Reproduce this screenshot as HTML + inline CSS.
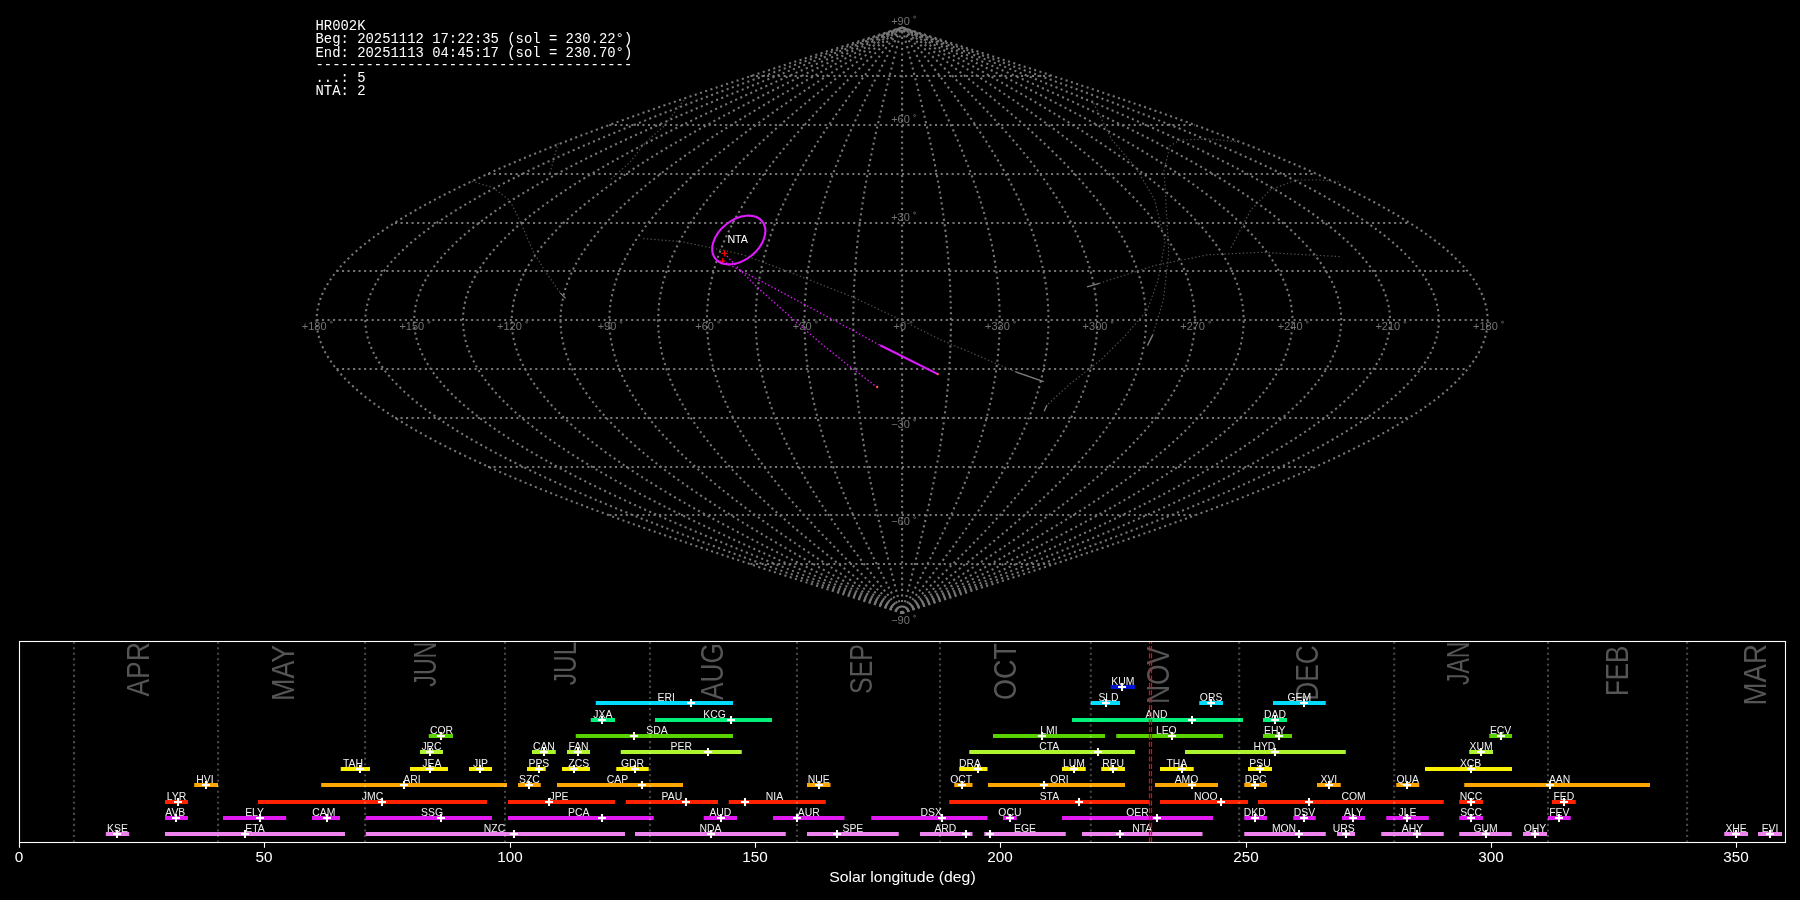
<!DOCTYPE html><html><head><meta charset="utf-8"><style>html,body{margin:0;padding:0;background:#000;width:1800px;height:900px;overflow:hidden}svg{display:block;will-change:transform}</style></head><body>
<svg width="1800" height="900" viewBox="0 0 1800 900">
<rect x="0" y="0" width="1800" height="900" fill="#000"/>
<g fill="none" stroke="#767676" stroke-width="2.08" stroke-dasharray="2.08 3.44">
<path d="M902.1 613.0 L922.5 606.5 L942.9 600.0 L963.3 593.5 L983.6 587.0 L1003.8 580.5 L1023.9 574.0 L1043.8 567.5 L1063.5 560.9 L1083.1 554.4 L1102.4 547.9 L1121.5 541.4 L1140.3 534.9 L1158.8 528.4 L1177.0 521.9 L1194.9 515.4 L1212.4 508.9 L1229.6 502.4 L1246.3 495.9 L1262.6 489.4 L1278.5 482.9 L1293.9 476.4 L1308.9 469.9 L1323.3 463.3 L1337.3 456.8 L1350.7 450.3 L1363.6 443.8 L1375.9 437.3 L1387.6 430.8 L1398.7 424.3 L1409.2 417.8 L1419.1 411.3 L1428.4 404.8 L1437.1 398.3 L1445.1 391.8 L1452.4 385.3 L1459.0 378.8 L1465.0 372.3 L1470.3 365.7 L1474.9 359.2 L1478.8 352.7 L1482.0 346.2 L1484.5 339.7 L1486.3 333.2 L1487.3 326.7 L1487.7 320.2 L1487.3 313.7 L1486.3 307.2 L1484.5 300.7 L1482.0 294.2 L1478.8 287.7 L1474.9 281.2 L1470.3 274.7 L1465.0 268.1 L1459.0 261.6 L1452.4 255.1 L1445.1 248.6 L1437.1 242.1 L1428.4 235.6 L1419.1 229.1 L1409.2 222.6 L1398.7 216.1 L1387.6 209.6 L1375.9 203.1 L1363.6 196.6 L1350.7 190.1 L1337.3 183.6 L1323.3 177.1 L1308.9 170.5 L1293.9 164.0 L1278.5 157.5 L1262.6 151.0 L1246.3 144.5 L1229.6 138.0 L1212.4 131.5 L1194.9 125.0 L1177.0 118.5 L1158.8 112.0 L1140.3 105.5 L1121.5 99.0 L1102.4 92.5 L1083.1 86.0 L1063.5 79.5 L1043.8 72.9 L1023.9 66.4 L1003.8 59.9 L983.6 53.4 L963.3 46.9 L942.9 40.4 L922.5 33.9 L902.1 27.4"/>
<path d="M902.1 613.0 L920.8 606.5 L939.5 600.0 L958.2 593.5 L976.8 587.0 L995.3 580.5 L1013.7 574.0 L1032.0 567.5 L1050.1 560.9 L1068.0 554.4 L1085.7 547.9 L1103.2 541.4 L1120.4 534.9 L1137.4 528.4 L1154.1 521.9 L1170.5 515.4 L1186.6 508.9 L1202.3 502.4 L1217.6 495.9 L1232.6 489.4 L1247.1 482.9 L1261.3 476.4 L1275.0 469.9 L1288.2 463.3 L1301.0 456.8 L1313.3 450.3 L1325.1 443.8 L1336.4 437.3 L1347.1 430.8 L1357.3 424.3 L1367.0 417.8 L1376.1 411.3 L1384.6 404.8 L1392.5 398.3 L1399.8 391.8 L1406.5 385.3 L1412.6 378.8 L1418.1 372.3 L1422.9 365.7 L1427.2 359.2 L1430.7 352.7 L1433.7 346.2 L1436.0 339.7 L1437.6 333.2 L1438.6 326.7 L1438.9 320.2 L1438.6 313.7 L1437.6 307.2 L1436.0 300.7 L1433.7 294.2 L1430.7 287.7 L1427.2 281.2 L1422.9 274.7 L1418.1 268.1 L1412.6 261.6 L1406.5 255.1 L1399.8 248.6 L1392.5 242.1 L1384.6 235.6 L1376.1 229.1 L1367.0 222.6 L1357.3 216.1 L1347.1 209.6 L1336.4 203.1 L1325.1 196.6 L1313.3 190.1 L1301.0 183.6 L1288.2 177.1 L1275.0 170.5 L1261.3 164.0 L1247.1 157.5 L1232.6 151.0 L1217.6 144.5 L1202.3 138.0 L1186.6 131.5 L1170.5 125.0 L1154.1 118.5 L1137.4 112.0 L1120.4 105.5 L1103.2 99.0 L1085.7 92.5 L1068.0 86.0 L1050.1 79.5 L1032.0 72.9 L1013.7 66.4 L995.3 59.9 L976.8 53.4 L958.2 46.9 L939.5 40.4 L920.8 33.9 L902.1 27.4"/>
<path d="M902.1 613.0 L919.1 606.5 L936.1 600.0 L953.1 593.5 L970.0 587.0 L986.8 580.5 L1003.6 574.0 L1020.2 567.5 L1036.6 560.9 L1052.9 554.4 L1069.0 547.9 L1084.9 541.4 L1100.6 534.9 L1116.0 528.4 L1131.2 521.9 L1146.1 515.4 L1160.7 508.9 L1175.0 502.4 L1188.9 495.9 L1202.5 489.4 L1215.8 482.9 L1228.6 476.4 L1241.1 469.9 L1253.1 463.3 L1264.8 456.8 L1275.9 450.3 L1286.6 443.8 L1296.9 437.3 L1306.7 430.8 L1315.9 424.3 L1324.7 417.8 L1333.0 411.3 L1340.7 404.8 L1347.9 398.3 L1354.6 391.8 L1360.7 385.3 L1366.2 378.8 L1371.2 372.3 L1375.6 365.7 L1379.4 359.2 L1382.7 352.7 L1385.3 346.2 L1387.4 339.7 L1388.9 333.2 L1389.8 326.7 L1390.1 320.2 L1389.8 313.7 L1388.9 307.2 L1387.4 300.7 L1385.3 294.2 L1382.7 287.7 L1379.4 281.2 L1375.6 274.7 L1371.2 268.1 L1366.2 261.6 L1360.7 255.1 L1354.6 248.6 L1347.9 242.1 L1340.7 235.6 L1333.0 229.1 L1324.7 222.6 L1315.9 216.1 L1306.7 209.6 L1296.9 203.1 L1286.6 196.6 L1275.9 190.1 L1264.8 183.6 L1253.1 177.1 L1241.1 170.5 L1228.6 164.0 L1215.8 157.5 L1202.5 151.0 L1188.9 144.5 L1175.0 138.0 L1160.7 131.5 L1146.1 125.0 L1131.2 118.5 L1116.0 112.0 L1100.6 105.5 L1084.9 99.0 L1069.0 92.5 L1052.9 86.0 L1036.6 79.5 L1020.2 72.9 L1003.6 66.4 L986.8 59.9 L970.0 53.4 L953.1 46.9 L936.1 40.4 L919.1 33.9 L902.1 27.4"/>
<path d="M902.1 613.0 L917.4 606.5 L932.7 600.0 L948.0 593.5 L963.2 587.0 L978.4 580.5 L993.4 574.0 L1008.4 567.5 L1023.2 560.9 L1037.8 554.4 L1052.3 547.9 L1066.6 541.4 L1080.7 534.9 L1094.6 528.4 L1108.3 521.9 L1121.7 515.4 L1134.8 508.9 L1147.7 502.4 L1160.3 495.9 L1172.5 489.4 L1184.4 482.9 L1196.0 476.4 L1207.2 469.9 L1218.0 463.3 L1228.5 456.8 L1238.5 450.3 L1248.2 443.8 L1257.4 437.3 L1266.2 430.8 L1274.6 424.3 L1282.5 417.8 L1289.9 411.3 L1296.8 404.8 L1303.3 398.3 L1309.3 391.8 L1314.8 385.3 L1319.8 378.8 L1324.3 372.3 L1328.2 365.7 L1331.7 359.2 L1334.6 352.7 L1337.0 346.2 L1338.9 339.7 L1340.2 333.2 L1341.0 326.7 L1341.3 320.2 L1341.0 313.7 L1340.2 307.2 L1338.9 300.7 L1337.0 294.2 L1334.6 287.7 L1331.7 281.2 L1328.2 274.7 L1324.3 268.1 L1319.8 261.6 L1314.8 255.1 L1309.3 248.6 L1303.3 242.1 L1296.8 235.6 L1289.9 229.1 L1282.5 222.6 L1274.6 216.1 L1266.2 209.6 L1257.4 203.1 L1248.2 196.6 L1238.5 190.1 L1228.5 183.6 L1218.0 177.1 L1207.2 170.5 L1196.0 164.0 L1184.4 157.5 L1172.5 151.0 L1160.3 144.5 L1147.7 138.0 L1134.8 131.5 L1121.7 125.0 L1108.3 118.5 L1094.6 112.0 L1080.7 105.5 L1066.6 99.0 L1052.3 92.5 L1037.8 86.0 L1023.2 79.5 L1008.4 72.9 L993.4 66.4 L978.4 59.9 L963.2 53.4 L948.0 46.9 L932.7 40.4 L917.4 33.9 L902.1 27.4"/>
<path d="M902.1 613.0 L915.7 606.5 L929.3 600.0 L942.9 593.5 L956.4 587.0 L969.9 580.5 L983.3 574.0 L996.5 567.5 L1009.7 560.9 L1022.7 554.4 L1035.6 547.9 L1048.3 541.4 L1060.9 534.9 L1073.2 528.4 L1085.4 521.9 L1097.3 515.4 L1109.0 508.9 L1120.4 502.4 L1131.6 495.9 L1142.5 489.4 L1153.0 482.9 L1163.3 476.4 L1173.3 469.9 L1182.9 463.3 L1192.2 456.8 L1201.2 450.3 L1209.7 443.8 L1217.9 437.3 L1225.8 430.8 L1233.2 424.3 L1240.2 417.8 L1246.8 411.3 L1253.0 404.8 L1258.7 398.3 L1264.1 391.8 L1269.0 385.3 L1273.4 378.8 L1277.4 372.3 L1280.9 365.7 L1284.0 359.2 L1286.6 352.7 L1288.7 346.2 L1290.4 339.7 L1291.5 333.2 L1292.3 326.7 L1292.5 320.2 L1292.3 313.7 L1291.5 307.2 L1290.4 300.7 L1288.7 294.2 L1286.6 287.7 L1284.0 281.2 L1280.9 274.7 L1277.4 268.1 L1273.4 261.6 L1269.0 255.1 L1264.1 248.6 L1258.7 242.1 L1253.0 235.6 L1246.8 229.1 L1240.2 222.6 L1233.2 216.1 L1225.8 209.6 L1217.9 203.1 L1209.7 196.6 L1201.2 190.1 L1192.2 183.6 L1182.9 177.1 L1173.3 170.5 L1163.3 164.0 L1153.0 157.5 L1142.5 151.0 L1131.6 144.5 L1120.4 138.0 L1109.0 131.5 L1097.3 125.0 L1085.4 118.5 L1073.2 112.0 L1060.9 105.5 L1048.3 99.0 L1035.6 92.5 L1022.7 86.0 L1009.7 79.5 L996.5 72.9 L983.3 66.4 L969.9 59.9 L956.4 53.4 L942.9 46.9 L929.3 40.4 L915.7 33.9 L902.1 27.4"/>
<path d="M902.1 613.0 L914.0 606.5 L925.9 600.0 L937.8 593.5 L949.6 587.0 L961.4 580.5 L973.1 574.0 L984.7 567.5 L996.3 560.9 L1007.7 554.4 L1018.9 547.9 L1030.1 541.4 L1041.0 534.9 L1051.8 528.4 L1062.5 521.9 L1072.9 515.4 L1083.1 508.9 L1093.1 502.4 L1102.9 495.9 L1112.4 489.4 L1121.7 482.9 L1130.7 476.4 L1139.4 469.9 L1147.8 463.3 L1156.0 456.8 L1163.8 450.3 L1171.3 443.8 L1178.5 437.3 L1185.3 430.8 L1191.8 424.3 L1197.9 417.8 L1203.7 411.3 L1209.1 404.8 L1214.2 398.3 L1218.8 391.8 L1223.1 385.3 L1227.0 378.8 L1230.5 372.3 L1233.5 365.7 L1236.2 359.2 L1238.5 352.7 L1240.4 346.2 L1241.8 339.7 L1242.9 333.2 L1243.5 326.7 L1243.7 320.2 L1243.5 313.7 L1242.9 307.2 L1241.8 300.7 L1240.4 294.2 L1238.5 287.7 L1236.2 281.2 L1233.5 274.7 L1230.5 268.1 L1227.0 261.6 L1223.1 255.1 L1218.8 248.6 L1214.2 242.1 L1209.1 235.6 L1203.7 229.1 L1197.9 222.6 L1191.8 216.1 L1185.3 209.6 L1178.5 203.1 L1171.3 196.6 L1163.8 190.1 L1156.0 183.6 L1147.8 177.1 L1139.4 170.5 L1130.7 164.0 L1121.7 157.5 L1112.4 151.0 L1102.9 144.5 L1093.1 138.0 L1083.1 131.5 L1072.9 125.0 L1062.5 118.5 L1051.8 112.0 L1041.0 105.5 L1030.1 99.0 L1018.9 92.5 L1007.7 86.0 L996.3 79.5 L984.7 72.9 L973.1 66.4 L961.4 59.9 L949.6 53.4 L937.8 46.9 L925.9 40.4 L914.0 33.9 L902.1 27.4"/>
<path d="M902.1 613.0 L912.3 606.5 L922.5 600.0 L932.7 593.5 L942.8 587.0 L952.9 580.5 L963.0 574.0 L972.9 567.5 L982.8 560.9 L992.6 554.4 L1002.2 547.9 L1011.8 541.4 L1021.2 534.9 L1030.5 528.4 L1039.6 521.9 L1048.5 515.4 L1057.3 508.9 L1065.8 502.4 L1074.2 495.9 L1082.4 489.4 L1090.3 482.9 L1098.0 476.4 L1105.5 469.9 L1112.7 463.3 L1119.7 456.8 L1126.4 450.3 L1132.8 443.8 L1139.0 437.3 L1144.8 430.8 L1150.4 424.3 L1155.7 417.8 L1160.6 411.3 L1165.3 404.8 L1169.6 398.3 L1173.6 391.8 L1177.2 385.3 L1180.6 378.8 L1183.6 372.3 L1186.2 365.7 L1188.5 359.2 L1190.4 352.7 L1192.0 346.2 L1193.3 339.7 L1194.2 333.2 L1194.7 326.7 L1194.9 320.2 L1194.7 313.7 L1194.2 307.2 L1193.3 300.7 L1192.0 294.2 L1190.4 287.7 L1188.5 281.2 L1186.2 274.7 L1183.6 268.1 L1180.6 261.6 L1177.2 255.1 L1173.6 248.6 L1169.6 242.1 L1165.3 235.6 L1160.6 229.1 L1155.7 222.6 L1150.4 216.1 L1144.8 209.6 L1139.0 203.1 L1132.8 196.6 L1126.4 190.1 L1119.7 183.6 L1112.7 177.1 L1105.5 170.5 L1098.0 164.0 L1090.3 157.5 L1082.4 151.0 L1074.2 144.5 L1065.8 138.0 L1057.3 131.5 L1048.5 125.0 L1039.6 118.5 L1030.5 112.0 L1021.2 105.5 L1011.8 99.0 L1002.2 92.5 L992.6 86.0 L982.8 79.5 L972.9 72.9 L963.0 66.4 L952.9 59.9 L942.8 53.4 L932.7 46.9 L922.5 40.4 L912.3 33.9 L902.1 27.4"/>
<path d="M902.1 613.0 L910.6 606.5 L919.1 600.0 L927.6 593.5 L936.1 587.0 L944.5 580.5 L952.8 574.0 L961.1 567.5 L969.4 560.9 L977.5 554.4 L985.6 547.9 L993.5 541.4 L1001.3 534.9 L1009.1 528.4 L1016.6 521.9 L1024.1 515.4 L1031.4 508.9 L1038.5 502.4 L1045.5 495.9 L1052.3 489.4 L1058.9 482.9 L1065.4 476.4 L1071.6 469.9 L1077.6 463.3 L1083.4 456.8 L1089.0 450.3 L1094.4 443.8 L1099.5 437.3 L1104.4 430.8 L1109.0 424.3 L1113.4 417.8 L1117.5 411.3 L1121.4 404.8 L1125.0 398.3 L1128.3 391.8 L1131.4 385.3 L1134.2 378.8 L1136.6 372.3 L1138.8 365.7 L1140.8 359.2 L1142.4 352.7 L1143.7 346.2 L1144.8 339.7 L1145.5 333.2 L1145.9 326.7 L1146.1 320.2 L1145.9 313.7 L1145.5 307.2 L1144.8 300.7 L1143.7 294.2 L1142.4 287.7 L1140.8 281.2 L1138.8 274.7 L1136.6 268.1 L1134.2 261.6 L1131.4 255.1 L1128.3 248.6 L1125.0 242.1 L1121.4 235.6 L1117.5 229.1 L1113.4 222.6 L1109.0 216.1 L1104.4 209.6 L1099.5 203.1 L1094.4 196.6 L1089.0 190.1 L1083.4 183.6 L1077.6 177.1 L1071.6 170.5 L1065.4 164.0 L1058.9 157.5 L1052.3 151.0 L1045.5 144.5 L1038.5 138.0 L1031.4 131.5 L1024.1 125.0 L1016.6 118.5 L1009.1 112.0 L1001.3 105.5 L993.5 99.0 L985.6 92.5 L977.5 86.0 L969.4 79.5 L961.1 72.9 L952.8 66.4 L944.5 59.9 L936.1 53.4 L927.6 46.9 L919.1 40.4 L910.6 33.9 L902.1 27.4"/>
<path d="M902.1 613.0 L908.9 606.5 L915.7 600.0 L922.5 593.5 L929.3 587.0 L936.0 580.5 L942.7 574.0 L949.3 567.5 L955.9 560.9 L962.4 554.4 L968.9 547.9 L975.2 541.4 L981.5 534.9 L987.7 528.4 L993.7 521.9 L999.7 515.4 L1005.5 508.9 L1011.3 502.4 L1016.8 495.9 L1022.3 489.4 L1027.6 482.9 L1032.7 476.4 L1037.7 469.9 L1042.5 463.3 L1047.2 456.8 L1051.6 450.3 L1055.9 443.8 L1060.0 437.3 L1063.9 430.8 L1067.6 424.3 L1071.1 417.8 L1074.4 411.3 L1077.5 404.8 L1080.4 398.3 L1083.1 391.8 L1085.5 385.3 L1087.7 378.8 L1089.7 372.3 L1091.5 365.7 L1093.0 359.2 L1094.3 352.7 L1095.4 346.2 L1096.2 339.7 L1096.8 333.2 L1097.2 326.7 L1097.3 320.2 L1097.2 313.7 L1096.8 307.2 L1096.2 300.7 L1095.4 294.2 L1094.3 287.7 L1093.0 281.2 L1091.5 274.7 L1089.7 268.1 L1087.7 261.6 L1085.5 255.1 L1083.1 248.6 L1080.4 242.1 L1077.5 235.6 L1074.4 229.1 L1071.1 222.6 L1067.6 216.1 L1063.9 209.6 L1060.0 203.1 L1055.9 196.6 L1051.6 190.1 L1047.2 183.6 L1042.5 177.1 L1037.7 170.5 L1032.7 164.0 L1027.6 157.5 L1022.3 151.0 L1016.8 144.5 L1011.3 138.0 L1005.5 131.5 L999.7 125.0 L993.7 118.5 L987.7 112.0 L981.5 105.5 L975.2 99.0 L968.9 92.5 L962.4 86.0 L955.9 79.5 L949.3 72.9 L942.7 66.4 L936.0 59.9 L929.3 53.4 L922.5 46.9 L915.7 40.4 L908.9 33.9 L902.1 27.4"/>
<path d="M902.1 613.0 L907.2 606.5 L912.3 600.0 L917.4 593.5 L922.5 587.0 L927.5 580.5 L932.5 574.0 L937.5 567.5 L942.5 560.9 L947.3 554.4 L952.2 547.9 L956.9 541.4 L961.6 534.9 L966.3 528.4 L970.8 521.9 L975.3 515.4 L979.7 508.9 L984.0 502.4 L988.2 495.9 L992.2 489.4 L996.2 482.9 L1000.1 476.4 L1003.8 469.9 L1007.4 463.3 L1010.9 456.8 L1014.2 450.3 L1017.5 443.8 L1020.5 437.3 L1023.5 430.8 L1026.3 424.3 L1028.9 417.8 L1031.4 411.3 L1033.7 404.8 L1035.8 398.3 L1037.8 391.8 L1039.7 385.3 L1041.3 378.8 L1042.8 372.3 L1044.1 365.7 L1045.3 359.2 L1046.3 352.7 L1047.1 346.2 L1047.7 339.7 L1048.1 333.2 L1048.4 326.7 L1048.5 320.2 L1048.4 313.7 L1048.1 307.2 L1047.7 300.7 L1047.1 294.2 L1046.3 287.7 L1045.3 281.2 L1044.1 274.7 L1042.8 268.1 L1041.3 261.6 L1039.7 255.1 L1037.8 248.6 L1035.8 242.1 L1033.7 235.6 L1031.4 229.1 L1028.9 222.6 L1026.3 216.1 L1023.5 209.6 L1020.5 203.1 L1017.5 196.6 L1014.2 190.1 L1010.9 183.6 L1007.4 177.1 L1003.8 170.5 L1000.1 164.0 L996.2 157.5 L992.2 151.0 L988.2 144.5 L984.0 138.0 L979.7 131.5 L975.3 125.0 L970.8 118.5 L966.3 112.0 L961.6 105.5 L956.9 99.0 L952.2 92.5 L947.3 86.0 L942.5 79.5 L937.5 72.9 L932.5 66.4 L927.5 59.9 L922.5 53.4 L917.4 46.9 L912.3 40.4 L907.2 33.9 L902.1 27.4"/>
<path d="M902.1 613.0 L905.5 606.5 L908.9 600.0 L912.3 593.5 L915.7 587.0 L919.0 580.5 L922.4 574.0 L925.7 567.5 L929.0 560.9 L932.3 554.4 L935.5 547.9 L938.7 541.4 L941.8 534.9 L944.9 528.4 L947.9 521.9 L950.9 515.4 L953.8 508.9 L956.7 502.4 L959.5 495.9 L962.2 489.4 L964.8 482.9 L967.4 476.4 L969.9 469.9 L972.3 463.3 L974.6 456.8 L976.9 450.3 L979.0 443.8 L981.1 437.3 L983.0 430.8 L984.9 424.3 L986.6 417.8 L988.3 411.3 L989.8 404.8 L991.3 398.3 L992.6 391.8 L993.8 385.3 L994.9 378.8 L995.9 372.3 L996.8 365.7 L997.6 359.2 L998.2 352.7 L998.7 346.2 L999.2 339.7 L999.5 333.2 L999.6 326.7 L999.7 320.2 L999.6 313.7 L999.5 307.2 L999.2 300.7 L998.7 294.2 L998.2 287.7 L997.6 281.2 L996.8 274.7 L995.9 268.1 L994.9 261.6 L993.8 255.1 L992.6 248.6 L991.3 242.1 L989.8 235.6 L988.3 229.1 L986.6 222.6 L984.9 216.1 L983.0 209.6 L981.1 203.1 L979.0 196.6 L976.9 190.1 L974.6 183.6 L972.3 177.1 L969.9 170.5 L967.4 164.0 L964.8 157.5 L962.2 151.0 L959.5 144.5 L956.7 138.0 L953.8 131.5 L950.9 125.0 L947.9 118.5 L944.9 112.0 L941.8 105.5 L938.7 99.0 L935.5 92.5 L932.3 86.0 L929.0 79.5 L925.7 72.9 L922.4 66.4 L919.0 59.9 L915.7 53.4 L912.3 46.9 L908.9 40.4 L905.5 33.9 L902.1 27.4"/>
<path d="M902.1 613.0 L903.8 606.5 L905.5 600.0 L907.2 593.5 L908.9 587.0 L910.6 580.5 L912.2 574.0 L913.9 567.5 L915.6 560.9 L917.2 554.4 L918.8 547.9 L920.4 541.4 L921.9 534.9 L923.5 528.4 L925.0 521.9 L926.5 515.4 L928.0 508.9 L929.4 502.4 L930.8 495.9 L932.1 489.4 L933.5 482.9 L934.8 476.4 L936.0 469.9 L937.2 463.3 L938.4 456.8 L939.5 450.3 L940.6 443.8 L941.6 437.3 L942.6 430.8 L943.5 424.3 L944.4 417.8 L945.2 411.3 L946.0 404.8 L946.7 398.3 L947.3 391.8 L948.0 385.3 L948.5 378.8 L949.0 372.3 L949.4 365.7 L949.8 359.2 L950.2 352.7 L950.4 346.2 L950.6 339.7 L950.8 333.2 L950.9 326.7 L950.9 320.2 L950.9 313.7 L950.8 307.2 L950.6 300.7 L950.4 294.2 L950.2 287.7 L949.8 281.2 L949.4 274.7 L949.0 268.1 L948.5 261.6 L948.0 255.1 L947.3 248.6 L946.7 242.1 L946.0 235.6 L945.2 229.1 L944.4 222.6 L943.5 216.1 L942.6 209.6 L941.6 203.1 L940.6 196.6 L939.5 190.1 L938.4 183.6 L937.2 177.1 L936.0 170.5 L934.8 164.0 L933.5 157.5 L932.1 151.0 L930.8 144.5 L929.4 138.0 L928.0 131.5 L926.5 125.0 L925.0 118.5 L923.5 112.0 L921.9 105.5 L920.4 99.0 L918.8 92.5 L917.2 86.0 L915.6 79.5 L913.9 72.9 L912.2 66.4 L910.6 59.9 L908.9 53.4 L907.2 46.9 L905.5 40.4 L903.8 33.9 L902.1 27.4"/>
<path d="M902.1 613.0 L902.1 606.5 L902.1 600.0 L902.1 593.5 L902.1 587.0 L902.1 580.5 L902.1 574.0 L902.1 567.5 L902.1 560.9 L902.1 554.4 L902.1 547.9 L902.1 541.4 L902.1 534.9 L902.1 528.4 L902.1 521.9 L902.1 515.4 L902.1 508.9 L902.1 502.4 L902.1 495.9 L902.1 489.4 L902.1 482.9 L902.1 476.4 L902.1 469.9 L902.1 463.3 L902.1 456.8 L902.1 450.3 L902.1 443.8 L902.1 437.3 L902.1 430.8 L902.1 424.3 L902.1 417.8 L902.1 411.3 L902.1 404.8 L902.1 398.3 L902.1 391.8 L902.1 385.3 L902.1 378.8 L902.1 372.3 L902.1 365.7 L902.1 359.2 L902.1 352.7 L902.1 346.2 L902.1 339.7 L902.1 333.2 L902.1 326.7 L902.1 320.2 L902.1 313.7 L902.1 307.2 L902.1 300.7 L902.1 294.2 L902.1 287.7 L902.1 281.2 L902.1 274.7 L902.1 268.1 L902.1 261.6 L902.1 255.1 L902.1 248.6 L902.1 242.1 L902.1 235.6 L902.1 229.1 L902.1 222.6 L902.1 216.1 L902.1 209.6 L902.1 203.1 L902.1 196.6 L902.1 190.1 L902.1 183.6 L902.1 177.1 L902.1 170.5 L902.1 164.0 L902.1 157.5 L902.1 151.0 L902.1 144.5 L902.1 138.0 L902.1 131.5 L902.1 125.0 L902.1 118.5 L902.1 112.0 L902.1 105.5 L902.1 99.0 L902.1 92.5 L902.1 86.0 L902.1 79.5 L902.1 72.9 L902.1 66.4 L902.1 59.9 L902.1 53.4 L902.1 46.9 L902.1 40.4 L902.1 33.9 L902.1 27.4"/>
<path d="M902.1 613.0 L900.4 606.5 L898.7 600.0 L897.0 593.5 L895.3 587.0 L893.6 580.5 L892.0 574.0 L890.3 567.5 L888.6 560.9 L887.0 554.4 L885.4 547.9 L883.8 541.4 L882.3 534.9 L880.7 528.4 L879.2 521.9 L877.7 515.4 L876.2 508.9 L874.8 502.4 L873.4 495.9 L872.1 489.4 L870.7 482.9 L869.4 476.4 L868.2 469.9 L867.0 463.3 L865.8 456.8 L864.7 450.3 L863.6 443.8 L862.6 437.3 L861.6 430.8 L860.7 424.3 L859.8 417.8 L859.0 411.3 L858.2 404.8 L857.5 398.3 L856.9 391.8 L856.2 385.3 L855.7 378.8 L855.2 372.3 L854.8 365.7 L854.4 359.2 L854.0 352.7 L853.8 346.2 L853.6 339.7 L853.4 333.2 L853.3 326.7 L853.3 320.2 L853.3 313.7 L853.4 307.2 L853.6 300.7 L853.8 294.2 L854.0 287.7 L854.4 281.2 L854.8 274.7 L855.2 268.1 L855.7 261.6 L856.2 255.1 L856.9 248.6 L857.5 242.1 L858.2 235.6 L859.0 229.1 L859.8 222.6 L860.7 216.1 L861.6 209.6 L862.6 203.1 L863.6 196.6 L864.7 190.1 L865.8 183.6 L867.0 177.1 L868.2 170.5 L869.4 164.0 L870.7 157.5 L872.1 151.0 L873.4 144.5 L874.8 138.0 L876.2 131.5 L877.7 125.0 L879.2 118.5 L880.7 112.0 L882.3 105.5 L883.8 99.0 L885.4 92.5 L887.0 86.0 L888.6 79.5 L890.3 72.9 L892.0 66.4 L893.6 59.9 L895.3 53.4 L897.0 46.9 L898.7 40.4 L900.4 33.9 L902.1 27.4"/>
<path d="M902.1 613.0 L898.7 606.5 L895.3 600.0 L891.9 593.5 L888.5 587.0 L885.2 580.5 L881.8 574.0 L878.5 567.5 L875.2 560.9 L871.9 554.4 L868.7 547.9 L865.5 541.4 L862.4 534.9 L859.3 528.4 L856.3 521.9 L853.3 515.4 L850.4 508.9 L847.5 502.4 L844.7 495.9 L842.0 489.4 L839.4 482.9 L836.8 476.4 L834.3 469.9 L831.9 463.3 L829.6 456.8 L827.3 450.3 L825.2 443.8 L823.1 437.3 L821.2 430.8 L819.3 424.3 L817.6 417.8 L815.9 411.3 L814.4 404.8 L812.9 398.3 L811.6 391.8 L810.4 385.3 L809.3 378.8 L808.3 372.3 L807.4 365.7 L806.6 359.2 L806.0 352.7 L805.5 346.2 L805.0 339.7 L804.7 333.2 L804.6 326.7 L804.5 320.2 L804.6 313.7 L804.7 307.2 L805.0 300.7 L805.5 294.2 L806.0 287.7 L806.6 281.2 L807.4 274.7 L808.3 268.1 L809.3 261.6 L810.4 255.1 L811.6 248.6 L812.9 242.1 L814.4 235.6 L815.9 229.1 L817.6 222.6 L819.3 216.1 L821.2 209.6 L823.1 203.1 L825.2 196.6 L827.3 190.1 L829.6 183.6 L831.9 177.1 L834.3 170.5 L836.8 164.0 L839.4 157.5 L842.0 151.0 L844.7 144.5 L847.5 138.0 L850.4 131.5 L853.3 125.0 L856.3 118.5 L859.3 112.0 L862.4 105.5 L865.5 99.0 L868.7 92.5 L871.9 86.0 L875.2 79.5 L878.5 72.9 L881.8 66.4 L885.2 59.9 L888.5 53.4 L891.9 46.9 L895.3 40.4 L898.7 33.9 L902.1 27.4"/>
<path d="M902.1 613.0 L897.0 606.5 L891.9 600.0 L886.8 593.5 L881.7 587.0 L876.7 580.5 L871.7 574.0 L866.7 567.5 L861.7 560.9 L856.9 554.4 L852.0 547.9 L847.3 541.4 L842.6 534.9 L837.9 528.4 L833.4 521.9 L828.9 515.4 L824.5 508.9 L820.2 502.4 L816.0 495.9 L812.0 489.4 L808.0 482.9 L804.1 476.4 L800.4 469.9 L796.8 463.3 L793.3 456.8 L790.0 450.3 L786.7 443.8 L783.7 437.3 L780.7 430.8 L777.9 424.3 L775.3 417.8 L772.8 411.3 L770.5 404.8 L768.4 398.3 L766.4 391.8 L764.5 385.3 L762.9 378.8 L761.4 372.3 L760.1 365.7 L758.9 359.2 L757.9 352.7 L757.1 346.2 L756.5 339.7 L756.1 333.2 L755.8 326.7 L755.7 320.2 L755.8 313.7 L756.1 307.2 L756.5 300.7 L757.1 294.2 L757.9 287.7 L758.9 281.2 L760.1 274.7 L761.4 268.1 L762.9 261.6 L764.5 255.1 L766.4 248.6 L768.4 242.1 L770.5 235.6 L772.8 229.1 L775.3 222.6 L777.9 216.1 L780.7 209.6 L783.7 203.1 L786.7 196.6 L790.0 190.1 L793.3 183.6 L796.8 177.1 L800.4 170.5 L804.1 164.0 L808.0 157.5 L812.0 151.0 L816.0 144.5 L820.2 138.0 L824.5 131.5 L828.9 125.0 L833.4 118.5 L837.9 112.0 L842.6 105.5 L847.3 99.0 L852.0 92.5 L856.9 86.0 L861.7 79.5 L866.7 72.9 L871.7 66.4 L876.7 59.9 L881.7 53.4 L886.8 46.9 L891.9 40.4 L897.0 33.9 L902.1 27.4"/>
<path d="M902.1 613.0 L895.3 606.5 L888.5 600.0 L881.7 593.5 L874.9 587.0 L868.2 580.5 L861.5 574.0 L854.9 567.5 L848.3 560.9 L841.8 554.4 L835.3 547.9 L829.0 541.4 L822.7 534.9 L816.5 528.4 L810.5 521.9 L804.5 515.4 L798.7 508.9 L792.9 502.4 L787.4 495.9 L781.9 489.4 L776.6 482.9 L771.5 476.4 L766.5 469.9 L761.7 463.3 L757.0 456.8 L752.6 450.3 L748.3 443.8 L744.2 437.3 L740.3 430.8 L736.6 424.3 L733.1 417.8 L729.8 411.3 L726.7 404.8 L723.8 398.3 L721.1 391.8 L718.7 385.3 L716.5 378.8 L714.5 372.3 L712.7 365.7 L711.2 359.2 L709.9 352.7 L708.8 346.2 L708.0 339.7 L707.4 333.2 L707.0 326.7 L706.9 320.2 L707.0 313.7 L707.4 307.2 L708.0 300.7 L708.8 294.2 L709.9 287.7 L711.2 281.2 L712.7 274.7 L714.5 268.1 L716.5 261.6 L718.7 255.1 L721.1 248.6 L723.8 242.1 L726.7 235.6 L729.8 229.1 L733.1 222.6 L736.6 216.1 L740.3 209.6 L744.2 203.1 L748.3 196.6 L752.6 190.1 L757.0 183.6 L761.7 177.1 L766.5 170.5 L771.5 164.0 L776.6 157.5 L781.9 151.0 L787.4 144.5 L792.9 138.0 L798.7 131.5 L804.5 125.0 L810.5 118.5 L816.5 112.0 L822.7 105.5 L829.0 99.0 L835.3 92.5 L841.8 86.0 L848.3 79.5 L854.9 72.9 L861.5 66.4 L868.2 59.9 L874.9 53.4 L881.7 46.9 L888.5 40.4 L895.3 33.9 L902.1 27.4"/>
<path d="M902.1 613.0 L893.6 606.5 L885.1 600.0 L876.6 593.5 L868.1 587.0 L859.7 580.5 L851.4 574.0 L843.1 567.5 L834.8 560.9 L826.7 554.4 L818.6 547.9 L810.7 541.4 L802.9 534.9 L795.1 528.4 L787.6 521.9 L780.1 515.4 L772.8 508.9 L765.7 502.4 L758.7 495.9 L751.9 489.4 L745.3 482.9 L738.8 476.4 L732.6 469.9 L726.6 463.3 L720.8 456.8 L715.2 450.3 L709.8 443.8 L704.7 437.3 L699.8 430.8 L695.2 424.3 L690.8 417.8 L686.7 411.3 L682.8 404.8 L679.2 398.3 L675.9 391.8 L672.8 385.3 L670.0 378.8 L667.6 372.3 L665.4 365.7 L663.4 359.2 L661.8 352.7 L660.5 346.2 L659.4 339.7 L658.7 333.2 L658.3 326.7 L658.1 320.2 L658.3 313.7 L658.7 307.2 L659.4 300.7 L660.5 294.2 L661.8 287.7 L663.4 281.2 L665.4 274.7 L667.6 268.1 L670.0 261.6 L672.8 255.1 L675.9 248.6 L679.2 242.1 L682.8 235.6 L686.7 229.1 L690.8 222.6 L695.2 216.1 L699.8 209.6 L704.7 203.1 L709.8 196.6 L715.2 190.1 L720.8 183.6 L726.6 177.1 L732.6 170.5 L738.8 164.0 L745.3 157.5 L751.9 151.0 L758.7 144.5 L765.7 138.0 L772.8 131.5 L780.1 125.0 L787.6 118.5 L795.1 112.0 L802.9 105.5 L810.7 99.0 L818.6 92.5 L826.7 86.0 L834.8 79.5 L843.1 72.9 L851.4 66.4 L859.7 59.9 L868.1 53.4 L876.6 46.9 L885.1 40.4 L893.6 33.9 L902.1 27.4"/>
<path d="M902.1 613.0 L891.9 606.5 L881.7 600.0 L871.5 593.5 L861.4 587.0 L851.3 580.5 L841.2 574.0 L831.3 567.5 L821.4 560.9 L811.6 554.4 L802.0 547.9 L792.4 541.4 L783.0 534.9 L773.7 528.4 L764.6 521.9 L755.7 515.4 L746.9 508.9 L738.4 502.4 L730.0 495.9 L721.8 489.4 L713.9 482.9 L706.2 476.4 L698.7 469.9 L691.5 463.3 L684.5 456.8 L677.8 450.3 L671.4 443.8 L665.2 437.3 L659.4 430.8 L653.8 424.3 L648.5 417.8 L643.6 411.3 L638.9 404.8 L634.6 398.3 L630.6 391.8 L627.0 385.3 L623.6 378.8 L620.6 372.3 L618.0 365.7 L615.7 359.2 L613.8 352.7 L612.2 346.2 L610.9 339.7 L610.0 333.2 L609.5 326.7 L609.3 320.2 L609.5 313.7 L610.0 307.2 L610.9 300.7 L612.2 294.2 L613.8 287.7 L615.7 281.2 L618.0 274.7 L620.6 268.1 L623.6 261.6 L627.0 255.1 L630.6 248.6 L634.6 242.1 L638.9 235.6 L643.6 229.1 L648.5 222.6 L653.8 216.1 L659.4 209.6 L665.2 203.1 L671.4 196.6 L677.8 190.1 L684.5 183.6 L691.5 177.1 L698.7 170.5 L706.2 164.0 L713.9 157.5 L721.8 151.0 L730.0 144.5 L738.4 138.0 L746.9 131.5 L755.7 125.0 L764.6 118.5 L773.7 112.0 L783.0 105.5 L792.4 99.0 L802.0 92.5 L811.6 86.0 L821.4 79.5 L831.3 72.9 L841.2 66.4 L851.3 59.9 L861.4 53.4 L871.5 46.9 L881.7 40.4 L891.9 33.9 L902.1 27.4"/>
<path d="M902.1 613.0 L890.2 606.5 L878.3 600.0 L866.4 593.5 L854.6 587.0 L842.8 580.5 L831.1 574.0 L819.5 567.5 L807.9 560.9 L796.5 554.4 L785.3 547.9 L774.1 541.4 L763.2 534.9 L752.4 528.4 L741.7 521.9 L731.3 515.4 L721.1 508.9 L711.1 502.4 L701.3 495.9 L691.8 489.4 L682.5 482.9 L673.5 476.4 L664.8 469.9 L656.4 463.3 L648.2 456.8 L640.4 450.3 L632.9 443.8 L625.7 437.3 L618.9 430.8 L612.4 424.3 L606.3 417.8 L600.5 411.3 L595.1 404.8 L590.0 398.3 L585.4 391.8 L581.1 385.3 L577.2 378.8 L573.7 372.3 L570.7 365.7 L568.0 359.2 L565.7 352.7 L563.8 346.2 L562.4 339.7 L561.3 333.2 L560.7 326.7 L560.5 320.2 L560.7 313.7 L561.3 307.2 L562.4 300.7 L563.8 294.2 L565.7 287.7 L568.0 281.2 L570.7 274.7 L573.7 268.1 L577.2 261.6 L581.1 255.1 L585.4 248.6 L590.0 242.1 L595.1 235.6 L600.5 229.1 L606.3 222.6 L612.4 216.1 L618.9 209.6 L625.7 203.1 L632.9 196.6 L640.4 190.1 L648.2 183.6 L656.4 177.1 L664.8 170.5 L673.5 164.0 L682.5 157.5 L691.8 151.0 L701.3 144.5 L711.1 138.0 L721.1 131.5 L731.3 125.0 L741.7 118.5 L752.4 112.0 L763.2 105.5 L774.1 99.0 L785.3 92.5 L796.5 86.0 L807.9 79.5 L819.5 72.9 L831.1 66.4 L842.8 59.9 L854.6 53.4 L866.4 46.9 L878.3 40.4 L890.2 33.9 L902.1 27.4"/>
<path d="M902.1 613.0 L888.5 606.5 L874.9 600.0 L861.3 593.5 L847.8 587.0 L834.3 580.5 L820.9 574.0 L807.7 567.5 L794.5 560.9 L781.5 554.4 L768.6 547.9 L755.9 541.4 L743.3 534.9 L731.0 528.4 L718.8 521.9 L706.9 515.4 L695.2 508.9 L683.8 502.4 L672.6 495.9 L661.7 489.4 L651.2 482.9 L640.9 476.4 L630.9 469.9 L621.3 463.3 L612.0 456.8 L603.0 450.3 L594.5 443.8 L586.3 437.3 L578.4 430.8 L571.0 424.3 L564.0 417.8 L557.4 411.3 L551.2 404.8 L545.5 398.3 L540.1 391.8 L535.2 385.3 L530.8 378.8 L526.8 372.3 L523.3 365.7 L520.2 359.2 L517.6 352.7 L515.5 346.2 L513.8 339.7 L512.7 333.2 L511.9 326.7 L511.7 320.2 L511.9 313.7 L512.7 307.2 L513.8 300.7 L515.5 294.2 L517.6 287.7 L520.2 281.2 L523.3 274.7 L526.8 268.1 L530.8 261.6 L535.2 255.1 L540.1 248.6 L545.5 242.1 L551.2 235.6 L557.4 229.1 L564.0 222.6 L571.0 216.1 L578.4 209.6 L586.3 203.1 L594.5 196.6 L603.0 190.1 L612.0 183.6 L621.3 177.1 L630.9 170.5 L640.9 164.0 L651.2 157.5 L661.7 151.0 L672.6 144.5 L683.8 138.0 L695.2 131.5 L706.9 125.0 L718.8 118.5 L731.0 112.0 L743.3 105.5 L755.9 99.0 L768.6 92.5 L781.5 86.0 L794.5 79.5 L807.7 72.9 L820.9 66.4 L834.3 59.9 L847.8 53.4 L861.3 46.9 L874.9 40.4 L888.5 33.9 L902.1 27.4"/>
<path d="M902.1 613.0 L886.8 606.5 L871.5 600.0 L856.2 593.5 L841.0 587.0 L825.8 580.5 L810.8 574.0 L795.8 567.5 L781.0 560.9 L766.4 554.4 L751.9 547.9 L737.6 541.4 L723.5 534.9 L709.6 528.4 L695.9 521.9 L682.5 515.4 L669.4 508.9 L656.5 502.4 L643.9 495.9 L631.7 489.4 L619.8 482.9 L608.2 476.4 L597.0 469.9 L586.2 463.3 L575.7 456.8 L565.7 450.3 L556.0 443.8 L546.8 437.3 L538.0 430.8 L529.6 424.3 L521.7 417.8 L514.3 411.3 L507.4 404.8 L500.9 398.3 L494.9 391.8 L489.4 385.3 L484.4 378.8 L479.9 372.3 L476.0 365.7 L472.5 359.2 L469.6 352.7 L467.2 346.2 L465.3 339.7 L464.0 333.2 L463.2 326.7 L462.9 320.2 L463.2 313.7 L464.0 307.2 L465.3 300.7 L467.2 294.2 L469.6 287.7 L472.5 281.2 L476.0 274.7 L479.9 268.1 L484.4 261.6 L489.4 255.1 L494.9 248.6 L500.9 242.1 L507.4 235.6 L514.3 229.1 L521.7 222.6 L529.6 216.1 L538.0 209.6 L546.8 203.1 L556.0 196.6 L565.7 190.1 L575.7 183.6 L586.2 177.1 L597.0 170.5 L608.2 164.0 L619.8 157.5 L631.7 151.0 L643.9 144.5 L656.5 138.0 L669.4 131.5 L682.5 125.0 L695.9 118.5 L709.6 112.0 L723.5 105.5 L737.6 99.0 L751.9 92.5 L766.4 86.0 L781.0 79.5 L795.8 72.9 L810.8 66.4 L825.8 59.9 L841.0 53.4 L856.2 46.9 L871.5 40.4 L886.8 33.9 L902.1 27.4"/>
<path d="M902.1 613.0 L885.1 606.5 L868.1 600.0 L851.1 593.5 L834.2 587.0 L817.4 580.5 L800.6 574.0 L784.0 567.5 L767.6 560.9 L751.3 554.4 L735.2 547.9 L719.3 541.4 L703.6 534.9 L688.2 528.4 L673.0 521.9 L658.1 515.4 L643.5 508.9 L629.2 502.4 L615.3 495.9 L601.7 489.4 L588.4 482.9 L575.6 476.4 L563.1 469.9 L551.1 463.3 L539.4 456.8 L528.3 450.3 L517.6 443.8 L507.3 437.3 L497.5 430.8 L488.3 424.3 L479.5 417.8 L471.2 411.3 L463.5 404.8 L456.3 398.3 L449.6 391.8 L443.5 385.3 L438.0 378.8 L433.0 372.3 L428.6 365.7 L424.8 359.2 L421.5 352.7 L418.9 346.2 L416.8 339.7 L415.3 333.2 L414.4 326.7 L414.1 320.2 L414.4 313.7 L415.3 307.2 L416.8 300.7 L418.9 294.2 L421.5 287.7 L424.8 281.2 L428.6 274.7 L433.0 268.1 L438.0 261.6 L443.5 255.1 L449.6 248.6 L456.3 242.1 L463.5 235.6 L471.2 229.1 L479.5 222.6 L488.3 216.1 L497.5 209.6 L507.3 203.1 L517.6 196.6 L528.3 190.1 L539.4 183.6 L551.1 177.1 L563.1 170.5 L575.6 164.0 L588.4 157.5 L601.7 151.0 L615.3 144.5 L629.2 138.0 L643.5 131.5 L658.1 125.0 L673.0 118.5 L688.2 112.0 L703.6 105.5 L719.3 99.0 L735.2 92.5 L751.3 86.0 L767.6 79.5 L784.0 72.9 L800.6 66.4 L817.4 59.9 L834.2 53.4 L851.1 46.9 L868.1 40.4 L885.1 33.9 L902.1 27.4"/>
<path d="M902.1 613.0 L883.4 606.5 L864.7 600.0 L846.0 593.5 L827.4 587.0 L808.9 580.5 L790.5 574.0 L772.2 567.5 L754.1 560.9 L736.2 554.4 L718.5 547.9 L701.0 541.4 L683.8 534.9 L666.8 528.4 L650.1 521.9 L633.7 515.4 L617.6 508.9 L601.9 502.4 L586.6 495.9 L571.6 489.4 L557.1 482.9 L542.9 476.4 L529.2 469.9 L516.0 463.3 L503.2 456.8 L490.9 450.3 L479.1 443.8 L467.8 437.3 L457.1 430.8 L446.9 424.3 L437.2 417.8 L428.1 411.3 L419.6 404.8 L411.7 398.3 L404.4 391.8 L397.7 385.3 L391.6 378.8 L386.1 372.3 L381.3 365.7 L377.0 359.2 L373.5 352.7 L370.5 346.2 L368.2 339.7 L366.6 333.2 L365.6 326.7 L365.3 320.2 L365.6 313.7 L366.6 307.2 L368.2 300.7 L370.5 294.2 L373.5 287.7 L377.0 281.2 L381.3 274.7 L386.1 268.1 L391.6 261.6 L397.7 255.1 L404.4 248.6 L411.7 242.1 L419.6 235.6 L428.1 229.1 L437.2 222.6 L446.9 216.1 L457.1 209.6 L467.8 203.1 L479.1 196.6 L490.9 190.1 L503.2 183.6 L516.0 177.1 L529.2 170.5 L542.9 164.0 L557.1 157.5 L571.6 151.0 L586.6 144.5 L601.9 138.0 L617.6 131.5 L633.7 125.0 L650.1 118.5 L666.8 112.0 L683.8 105.5 L701.0 99.0 L718.5 92.5 L736.2 86.0 L754.1 79.5 L772.2 72.9 L790.5 66.4 L808.9 59.9 L827.4 53.4 L846.0 46.9 L864.7 40.4 L883.4 33.9 L902.1 27.4"/>
<path d="M902.1 613.0 L881.7 606.5 L861.3 600.0 L840.9 593.5 L820.6 587.0 L800.4 580.5 L780.3 574.0 L760.4 567.5 L740.7 560.9 L721.1 554.4 L701.8 547.9 L682.7 541.4 L663.9 534.9 L645.4 528.4 L627.2 521.9 L609.3 515.4 L591.8 508.9 L574.6 502.4 L557.9 495.9 L541.6 489.4 L525.7 482.9 L510.3 476.4 L495.3 469.9 L480.9 463.3 L466.9 456.8 L453.5 450.3 L440.6 443.8 L428.3 437.3 L416.6 430.8 L405.5 424.3 L395.0 417.8 L385.1 411.3 L375.8 404.8 L367.1 398.3 L359.1 391.8 L351.8 385.3 L345.2 378.8 L339.2 372.3 L333.9 365.7 L329.3 359.2 L325.4 352.7 L322.2 346.2 L319.7 339.7 L317.9 333.2 L316.9 326.7 L316.5 320.2 L316.9 313.7 L317.9 307.2 L319.7 300.7 L322.2 294.2 L325.4 287.7 L329.3 281.2 L333.9 274.7 L339.2 268.1 L345.2 261.6 L351.8 255.1 L359.1 248.6 L367.1 242.1 L375.8 235.6 L385.1 229.1 L395.0 222.6 L405.5 216.1 L416.6 209.6 L428.3 203.1 L440.6 196.6 L453.5 190.1 L466.9 183.6 L480.9 177.1 L495.3 170.5 L510.3 164.0 L525.7 157.5 L541.6 151.0 L557.9 144.5 L574.6 138.0 L591.8 131.5 L609.3 125.0 L627.2 118.5 L645.4 112.0 L663.9 105.5 L682.7 99.0 L701.8 92.5 L721.1 86.0 L740.7 79.5 L760.4 72.9 L780.3 66.4 L800.4 59.9 L820.6 53.4 L840.9 46.9 L861.3 40.4 L881.7 33.9 L902.1 27.4"/>
<path d="M750.5 564 H1053.7"/>
<path d="M609.3 515 H1194.9"/>
<path d="M488.0 467 H1316.2"/>
<path d="M395.0 418 H1409.2"/>
<path d="M336.5 369 H1467.7"/>
<path d="M316.5 320 H1487.7"/>
<path d="M336.5 271 H1467.7"/>
<path d="M395.0 223 H1409.2"/>
<path d="M488.0 174 H1316.2"/>
<path d="M609.3 125 H1194.9"/>
<path d="M750.5 76 H1053.7"/>
</g>
<g fill="none" stroke="#505050" stroke-width="1.2" stroke-dasharray="1.39 2.29">
<path d="M643.2 238.6 L681.1 241.6 L722.7 250.1 L742.3 254.6 L786.7 270.9 L853.2 297.2 L902.2 320.5 L941.3 340.0 L1015.3 371.7"/>
<path d="M471.7 181.2 L492.8 187.6 L509.7 200.2 L520.2 221.4 L532.9 250.9 L545.6 272.0 L560.4 293.1"/>
<path d="M558.2 143.2 L554.0 158.0 L549.8 174.0"/>
<path d="M611.0 179.1 L630.0 162.2 L644.8 143.2 L663.8 126.3 L684.0 100.0"/>
<path d="M1092.0 100.0 L1112.0 140.0 L1136.0 168.0 L1154.6 199.6 L1165.0 242.0 L1158.0 280.0 L1147.4 310.0 L1125.0 336.0 L1101.0 359.8 L1070.0 384.0 L1047.0 405.0"/>
<path d="M1152.8 334.9 L1163.5 299.3 L1168.8 253.0 L1165.2 189.0 L1164.0 170.0 L1170.0 146.0 L1180.0 140.0 L1210.0 139.0 L1240.0 142.0"/>
<path d="M1099.4 283.3 L1154.6 265.5 L1207.9 254.8 L1261.3 252.3 L1339.6 256.6"/>
<path d="M1231.0 247.7 L1250.6 210.3 L1270.0 190.0 L1296.0 180.0 L1320.0 180.0 L1339.6 181.8"/>
</g>
<g fill="none" stroke="#7e7e7e" stroke-width="1.3">
<path d="M1015.3 371.7 L1043.7 381.7"/>
<path d="M560.4 293.1 L565.6 298.4"/>
<path d="M1044.2 411.3 L1047.0 405.0"/>
<path d="M1147.4 345.6 L1152.8 334.9"/>
<path d="M1087.0 286.8 L1099.4 283.3"/>
</g>
<g font-family="Liberation Sans, sans-serif" font-size="11" fill="#747474" text-anchor="middle">
<text x="314.2" y="330">+180</text>
<text x="411.8" y="330">+150</text>
<text x="509.4" y="330">+120</text>
<text x="607.0" y="330">+90</text>
<text x="704.6" y="330">+60</text>
<text x="802.2" y="330">+30</text>
<text x="899.8" y="330">+0</text>
<text x="997.4" y="330">+330</text>
<text x="1095.0" y="330">+300</text>
<text x="1192.6" y="330">+270</text>
<text x="1290.2" y="330">+240</text>
<text x="1387.8" y="330">+210</text>
<text x="1485.4" y="330">+180</text>
<text x="900.5" y="24.9">+90</text>
<text x="900.5" y="123.3">+60</text>
<text x="900.5" y="220.9">+30</text>
<text x="900.5" y="427.8">−30</text>
<text x="900.5" y="525.4">−60</text>
<text x="900.5" y="624.0">−90</text>
</g>
<g fill="none" stroke="#606060" stroke-width="0.9">
<circle cx="331.4" cy="322.2" r="1.0"/>
<circle cx="429.0" cy="322.2" r="1.0"/>
<circle cx="526.6" cy="322.2" r="1.0"/>
<circle cx="621.1" cy="322.2" r="1.0"/>
<circle cx="718.7" cy="322.2" r="1.0"/>
<circle cx="816.3" cy="322.2" r="1.0"/>
<circle cx="910.9" cy="322.2" r="1.0"/>
<circle cx="1014.5" cy="322.2" r="1.0"/>
<circle cx="1112.1" cy="322.2" r="1.0"/>
<circle cx="1209.7" cy="322.2" r="1.0"/>
<circle cx="1307.3" cy="322.2" r="1.0"/>
<circle cx="1404.9" cy="322.2" r="1.0"/>
<circle cx="1502.5" cy="322.2" r="1.0"/>
<circle cx="914.6" cy="17.1" r="1.0"/>
<circle cx="914.6" cy="115.5" r="1.0"/>
<circle cx="914.6" cy="213.1" r="1.0"/>
<circle cx="914.6" cy="420.0" r="1.0"/>
<circle cx="914.6" cy="517.6" r="1.0"/>
<circle cx="914.6" cy="616.2" r="1.0"/>
</g>
<g fill="none" stroke="#e01aff" stroke-width="1.39" stroke-dasharray="1.39 2.29">
<path d="M724.4 253.3 L741.6 271.6 L759.6 289.4 L790.3 316.7 L821.0 343.5 L851.7 368.0 L876.7 386.9"/>
<path d="M722.5 261.1 L760.0 280.7 L794.2 298.9 L833.3 319.9 L880.2 345.3"/>
</g>
<path d="M880.2 345.3 L937.8 374.1" stroke="#e01aff" stroke-width="2.1" fill="none"/>
<circle cx="937.8" cy="374.1" r="1.2" fill="#ff5a3c"/><circle cx="877.2" cy="387" r="1.2" fill="#ff5a3c"/>
<g stroke="#ff0000" stroke-width="1.3" fill="none"><path d="M721.4 253.4 H727.6 M724.5 250.3 V256.5"/><path d="M719.5 261.1 H725.7 M722.6 258 V264.2"/></g>
<ellipse cx="738.8" cy="240" rx="29.9" ry="20.1" transform="rotate(-38.4 738.8 240)" fill="none" stroke="#e01aff" stroke-width="2.1"/>
<text x="737.7" y="243.1" font-family="Liberation Sans, sans-serif" font-size="10.7" fill="#fff" text-anchor="middle">NTA</text>
<g font-family="Liberation Mono, monospace" font-size="13.9" fill="#fff" xml:space="preserve">
<text x="315.5" y="30.0">HR002K</text>
<text x="315.5" y="43.4">Beg: 20251112 17:22:35 (sol = 230.22°)</text>
<text x="315.5" y="56.9">End: 20251113 04:45:17 (sol = 230.70°)</text>
<text x="315.5" y="69.0">--------------------------------------</text>
<text x="315.5" y="81.9">...: 5</text>
<text x="315.5" y="94.7">NTA: 2</text>
</g>
<g font-family="Liberation Sans, sans-serif" font-size="32" fill="#555555" text-anchor="middle">
<text transform="translate(149.20 669.42) rotate(-90) scale(0.8266 0.9719)" x="0" y="0">APR</text>
<text transform="translate(294.00 672.89) rotate(-90) scale(0.8391 0.9719)" x="0" y="0">MAY</text>
<text transform="translate(436.10 664.18) rotate(-90) scale(0.7233 0.9719)" x="0" y="0">JUN</text>
<text transform="translate(576.10 663.50) rotate(-90) scale(0.7643 0.9719)" x="0" y="0">JUL</text>
<text transform="translate(723.30 671.52) rotate(-90) scale(0.8250 0.9719)" x="0" y="0">AUG</text>
<text transform="translate(872.20 669.05) rotate(-90) scale(0.7790 0.9719)" x="0" y="0">SEP</text>
<text transform="translate(1016.10 671.55) rotate(-90) scale(0.8409 0.9719)" x="0" y="0">OCT</text>
<text transform="translate(1168.90 675.48) rotate(-90) scale(0.8250 0.9719)" x="0" y="0">NOV</text>
<text transform="translate(1318.30 672.96) rotate(-90) scale(0.8231 0.9719)" x="0" y="0">DEC</text>
<text transform="translate(1468.90 663.33) rotate(-90) scale(0.7190 0.9719)" x="0" y="0">JAN</text>
<text transform="translate(1628.30 670.85) rotate(-90) scale(0.8085 0.9719)" x="0" y="0">FEB</text>
<text transform="translate(1766.10 674.73) rotate(-90) scale(0.8627 0.9719)" x="0" y="0">MAR</text>
</g>
<rect x="105.80" y="832.00" width="23.40" height="4" fill="#ee82ee"/>
<rect x="165.00" y="832.00" width="180.00" height="4" fill="#ee82ee"/>
<rect x="365.75" y="832.00" width="259.25" height="4" fill="#ee82ee"/>
<rect x="635.00" y="832.00" width="150.75" height="4" fill="#ee82ee"/>
<rect x="807.00" y="832.00" width="91.75" height="4" fill="#ee82ee"/>
<rect x="920.00" y="832.00" width="52.50" height="4" fill="#ee82ee"/>
<rect x="984.25" y="832.00" width="81.50" height="4" fill="#ee82ee"/>
<rect x="1082.00" y="832.00" width="120.50" height="4" fill="#ee82ee"/>
<rect x="1244.25" y="832.00" width="81.50" height="4" fill="#ee82ee"/>
<rect x="1337.00" y="832.00" width="18.00" height="4" fill="#ee82ee"/>
<rect x="1381.25" y="832.00" width="62.50" height="4" fill="#ee82ee"/>
<rect x="1459.25" y="832.00" width="52.50" height="4" fill="#ee82ee"/>
<rect x="1523.00" y="832.00" width="24.00" height="4" fill="#ee82ee"/>
<rect x="1724.25" y="832.00" width="23.75" height="4" fill="#ee82ee"/>
<rect x="1758.00" y="832.00" width="24.00" height="4" fill="#ee82ee"/>
<rect x="165.00" y="816.00" width="23.00" height="4" fill="#e21af2"/>
<rect x="223.00" y="816.00" width="63.20" height="4" fill="#e21af2"/>
<rect x="312.00" y="816.00" width="28.00" height="4" fill="#e21af2"/>
<rect x="365.75" y="816.00" width="126.25" height="4" fill="#e21af2"/>
<rect x="508.00" y="816.00" width="145.75" height="4" fill="#e21af2"/>
<rect x="703.75" y="816.00" width="33.25" height="4" fill="#e21af2"/>
<rect x="773.00" y="816.00" width="71.50" height="4" fill="#e21af2"/>
<rect x="871.25" y="816.00" width="116.25" height="4" fill="#e21af2"/>
<rect x="1003.00" y="816.00" width="13.75" height="4" fill="#e21af2"/>
<rect x="1062.00" y="816.00" width="151.00" height="4" fill="#e21af2"/>
<rect x="1244.25" y="816.00" width="22.75" height="4" fill="#e21af2"/>
<rect x="1293.25" y="816.00" width="22.50" height="4" fill="#e21af2"/>
<rect x="1342.00" y="816.00" width="23.00" height="4" fill="#e21af2"/>
<rect x="1386.25" y="816.00" width="42.50" height="4" fill="#e21af2"/>
<rect x="1459.25" y="816.00" width="23.75" height="4" fill="#e21af2"/>
<rect x="1548.00" y="816.00" width="22.75" height="4" fill="#e21af2"/>
<rect x="165.00" y="800.00" width="23.00" height="4" fill="#ff2200"/>
<rect x="258.00" y="800.00" width="229.00" height="4" fill="#ff2200"/>
<rect x="508.00" y="800.00" width="107.00" height="4" fill="#ff2200"/>
<rect x="625.75" y="800.00" width="92.25" height="4" fill="#ff2200"/>
<rect x="728.75" y="800.00" width="97.00" height="4" fill="#ff2200"/>
<rect x="949.25" y="800.00" width="200.25" height="4" fill="#ff2200"/>
<rect x="1160.00" y="800.00" width="88.00" height="4" fill="#ff2200"/>
<rect x="1258.00" y="800.00" width="185.75" height="4" fill="#ff2200"/>
<rect x="1459.25" y="800.00" width="23.75" height="4" fill="#ff2200"/>
<rect x="1552.00" y="800.00" width="23.75" height="4" fill="#ff2200"/>
<rect x="194.20" y="783.00" width="23.80" height="4" fill="#ffa500"/>
<rect x="321.20" y="783.00" width="185.80" height="4" fill="#ffa500"/>
<rect x="518.00" y="783.00" width="22.75" height="4" fill="#ffa500"/>
<rect x="557.00" y="783.00" width="126.00" height="4" fill="#ffa500"/>
<rect x="807.00" y="783.00" width="23.50" height="4" fill="#ffa500"/>
<rect x="954.25" y="783.00" width="18.25" height="4" fill="#ffa500"/>
<rect x="988.00" y="783.00" width="137.00" height="4" fill="#ffa500"/>
<rect x="1155.00" y="783.00" width="63.00" height="4" fill="#ffa500"/>
<rect x="1244.25" y="783.00" width="22.75" height="4" fill="#ffa500"/>
<rect x="1317.00" y="783.00" width="23.75" height="4" fill="#ffa500"/>
<rect x="1396.25" y="783.00" width="23.00" height="4" fill="#ffa500"/>
<rect x="1464.25" y="783.00" width="185.75" height="4" fill="#ffa500"/>
<rect x="340.75" y="767.00" width="29.25" height="4" fill="#faf000"/>
<rect x="410.00" y="767.00" width="38.00" height="4" fill="#faf000"/>
<rect x="469.00" y="767.00" width="23.00" height="4" fill="#faf000"/>
<rect x="527.00" y="767.00" width="18.75" height="4" fill="#faf000"/>
<rect x="562.00" y="767.00" width="28.00" height="4" fill="#faf000"/>
<rect x="616.25" y="767.00" width="32.50" height="4" fill="#faf000"/>
<rect x="959.25" y="767.00" width="28.25" height="4" fill="#faf000"/>
<rect x="1062.00" y="767.00" width="23.75" height="4" fill="#faf000"/>
<rect x="1101.25" y="767.00" width="23.75" height="4" fill="#faf000"/>
<rect x="1160.00" y="767.00" width="33.75" height="4" fill="#faf000"/>
<rect x="1248.00" y="767.00" width="24.00" height="4" fill="#faf000"/>
<rect x="1425.00" y="767.00" width="87.00" height="4" fill="#faf000"/>
<rect x="420.00" y="750.00" width="23.00" height="4" fill="#adf52f"/>
<rect x="532.00" y="750.00" width="23.75" height="4" fill="#adf52f"/>
<rect x="567.00" y="750.00" width="23.00" height="4" fill="#adf52f"/>
<rect x="620.75" y="750.00" width="121.00" height="4" fill="#adf52f"/>
<rect x="969.25" y="750.00" width="165.75" height="4" fill="#adf52f"/>
<rect x="1185.00" y="750.00" width="160.75" height="4" fill="#adf52f"/>
<rect x="1469.25" y="750.00" width="23.75" height="4" fill="#adf52f"/>
<rect x="428.75" y="734.00" width="24.25" height="4" fill="#5ad200"/>
<rect x="575.75" y="734.00" width="157.25" height="4" fill="#5ad200"/>
<rect x="993.00" y="734.00" width="112.00" height="4" fill="#5ad200"/>
<rect x="1116.25" y="734.00" width="106.75" height="4" fill="#5ad200"/>
<rect x="1263.00" y="734.00" width="29.00" height="4" fill="#5ad200"/>
<rect x="1489.25" y="734.00" width="22.75" height="4" fill="#5ad200"/>
<rect x="590.75" y="718.00" width="24.25" height="4" fill="#00f078"/>
<rect x="655.00" y="718.00" width="117.00" height="4" fill="#00f078"/>
<rect x="1072.00" y="718.00" width="171.00" height="4" fill="#00f078"/>
<rect x="1263.00" y="718.00" width="24.00" height="4" fill="#00f078"/>
<rect x="595.75" y="701.00" width="137.25" height="4" fill="#00dcff"/>
<rect x="1090.75" y="701.00" width="29.25" height="4" fill="#00dcff"/>
<rect x="1199.25" y="701.00" width="23.75" height="4" fill="#00dcff"/>
<rect x="1273.00" y="701.00" width="52.75" height="4" fill="#00dcff"/>
<rect x="1110.75" y="685.00" width="24.25" height="4" fill="#0014d8"/>
<g stroke="rgba(255,255,255,0.28)" stroke-width="2.08" stroke-dasharray="2.08 3.44" fill="none">
<path d="M74.0 842.5 V641.5"/>
<path d="M218.1 842.5 V641.5"/>
<path d="M365.1 842.5 V641.5"/>
<path d="M505.0 842.5 V641.5"/>
<path d="M650.0 842.5 V641.5"/>
<path d="M797.0 842.5 V641.5"/>
<path d="M940.0 842.5 V641.5"/>
<path d="M1090.8 842.5 V641.5"/>
<path d="M1239.2 842.5 V641.5"/>
<path d="M1394.2 842.5 V641.5"/>
<path d="M1548.0 842.5 V641.5"/>
<path d="M1687.1 842.5 V641.5"/>
</g>
<g stroke="#fff" stroke-width="2.08" fill="none">
<path d="M113 834 h8 M117 830 v8"/>
<path d="M241 834 h8 M245 830 v8"/>
<path d="M510 834 h8 M514 830 v8"/>
<path d="M707 834 h8 M711 830 v8"/>
<path d="M833 834 h8 M837 830 v8"/>
<path d="M962 834 h8 M966 830 v8"/>
<path d="M986 834 h8 M990 830 v8"/>
<path d="M1116 834 h8 M1120 830 v8"/>
<path d="M1295 834 h8 M1299 830 v8"/>
<path d="M1342 834 h8 M1346 830 v8"/>
<path d="M1413 834 h8 M1417 830 v8"/>
<path d="M1482 834 h8 M1486 830 v8"/>
<path d="M1531 834 h8 M1535 830 v8"/>
<path d="M1732 834 h8 M1736 830 v8"/>
<path d="M1766 834 h8 M1770 830 v8"/>
<path d="M172 818 h8 M176 814 v8"/>
<path d="M256 818 h8 M260 814 v8"/>
<path d="M323 818 h8 M327 814 v8"/>
<path d="M437 818 h8 M441 814 v8"/>
<path d="M598 818 h8 M602 814 v8"/>
<path d="M717 818 h8 M721 814 v8"/>
<path d="M793 818 h8 M797 814 v8"/>
<path d="M938 818 h8 M942 814 v8"/>
<path d="M1006 818 h8 M1010 814 v8"/>
<path d="M1153 818 h8 M1157 814 v8"/>
<path d="M1251 818 h8 M1255 814 v8"/>
<path d="M1300 818 h8 M1304 814 v8"/>
<path d="M1349 818 h8 M1353 814 v8"/>
<path d="M1403 818 h8 M1407 814 v8"/>
<path d="M1467 818 h8 M1471 814 v8"/>
<path d="M1555 818 h8 M1559 814 v8"/>
<path d="M174 802 h8 M178 798 v8"/>
<path d="M378 802 h8 M382 798 v8"/>
<path d="M545 802 h8 M549 798 v8"/>
<path d="M682 802 h8 M686 798 v8"/>
<path d="M741 802 h8 M745 798 v8"/>
<path d="M1075 802 h8 M1079 798 v8"/>
<path d="M1217 802 h8 M1221 798 v8"/>
<path d="M1305 802 h8 M1309 798 v8"/>
<path d="M1467 802 h8 M1471 798 v8"/>
<path d="M1560 802 h8 M1564 798 v8"/>
<path d="M202 785 h8 M206 781 v8"/>
<path d="M400 785 h8 M404 781 v8"/>
<path d="M525 785 h8 M529 781 v8"/>
<path d="M638 785 h8 M642 781 v8"/>
<path d="M815 785 h8 M819 781 v8"/>
<path d="M958 785 h8 M962 781 v8"/>
<path d="M1040 785 h8 M1044 781 v8"/>
<path d="M1188 785 h8 M1192 781 v8"/>
<path d="M1251 785 h8 M1255 781 v8"/>
<path d="M1325 785 h8 M1329 781 v8"/>
<path d="M1403 785 h8 M1407 781 v8"/>
<path d="M1546 785 h8 M1550 781 v8"/>
<path d="M356 769 h8 M360 765 v8"/>
<path d="M426 769 h8 M430 765 v8"/>
<path d="M476 769 h8 M480 765 v8"/>
<path d="M535 769 h8 M539 765 v8"/>
<path d="M570 769 h8 M574 765 v8"/>
<path d="M631 769 h8 M635 765 v8"/>
<path d="M974 769 h8 M978 765 v8"/>
<path d="M1070 769 h8 M1074 765 v8"/>
<path d="M1109 769 h8 M1113 765 v8"/>
<path d="M1178 769 h8 M1182 765 v8"/>
<path d="M1256 769 h8 M1260 765 v8"/>
<path d="M1467 769 h8 M1471 765 v8"/>
<path d="M426 752 h8 M430 748 v8"/>
<path d="M540 752 h8 M544 748 v8"/>
<path d="M574 752 h8 M578 748 v8"/>
<path d="M704 752 h8 M708 748 v8"/>
<path d="M1094 752 h8 M1098 748 v8"/>
<path d="M1271 752 h8 M1275 748 v8"/>
<path d="M1477 752 h8 M1481 748 v8"/>
<path d="M437 736 h8 M441 732 v8"/>
<path d="M630 736 h8 M634 732 v8"/>
<path d="M1038 736 h8 M1042 732 v8"/>
<path d="M1168 736 h8 M1172 732 v8"/>
<path d="M1275 736 h8 M1279 732 v8"/>
<path d="M1497 736 h8 M1501 732 v8"/>
<path d="M598 720 h8 M602 716 v8"/>
<path d="M727 720 h8 M731 716 v8"/>
<path d="M1188 720 h8 M1192 716 v8"/>
<path d="M1271 720 h8 M1275 716 v8"/>
<path d="M687 703 h8 M691 699 v8"/>
<path d="M1102 703 h8 M1106 699 v8"/>
<path d="M1207 703 h8 M1211 699 v8"/>
<path d="M1300 703 h8 M1304 699 v8"/>
<path d="M1118 687 h8 M1122 683 v8"/>
</g>
<g font-family="Liberation Sans, sans-serif" font-size="10.4" fill="#f0f0f0" text-anchor="middle">
<text x="117.50" y="831.60">KSE</text>
<text x="255.00" y="831.60">ETA</text>
<text x="494.50" y="831.60">NZC</text>
<text x="710.38" y="831.60">NDA</text>
<text x="852.88" y="831.60">SPE</text>
<text x="945.40" y="831.60">ARD</text>
<text x="1025.00" y="831.60">EGE</text>
<text x="1142.25" y="831.60">NTA</text>
<text x="1284.00" y="831.60">MON</text>
<text x="1343.70" y="831.60">URS</text>
<text x="1412.50" y="831.60">AHY</text>
<text x="1485.50" y="831.60">GUM</text>
<text x="1535.00" y="831.60">OHY</text>
<text x="1736.12" y="831.60">XHE</text>
<text x="1770.00" y="831.60">EVI</text>
<text x="175.30" y="815.60">AVB</text>
<text x="254.60" y="815.60">ELY</text>
<text x="323.75" y="815.60">CAM</text>
<text x="432.10" y="815.60">SSG</text>
<text x="578.75" y="815.60">PCA</text>
<text x="720.38" y="815.60">AUD</text>
<text x="808.75" y="815.60">AUR</text>
<text x="931.20" y="815.60">DSX</text>
<text x="1009.88" y="815.60">OCU</text>
<text x="1137.50" y="815.60">OER</text>
<text x="1254.70" y="815.60">DKD</text>
<text x="1304.50" y="815.60">DSV</text>
<text x="1353.50" y="815.60">ALY</text>
<text x="1407.50" y="815.60">JLE</text>
<text x="1471.12" y="815.60">SCC</text>
<text x="1559.38" y="815.60">FEV</text>
<text x="176.50" y="799.60">LYR</text>
<text x="372.50" y="799.60">JMC</text>
<text x="559.00" y="799.60">JPE</text>
<text x="671.88" y="799.60">PAU</text>
<text x="774.50" y="799.60">NIA</text>
<text x="1049.38" y="799.60">STA</text>
<text x="1205.80" y="799.60">NOO</text>
<text x="1353.50" y="799.60">COM</text>
<text x="1471.12" y="799.60">NCC</text>
<text x="1563.88" y="799.60">FED</text>
<text x="205.00" y="782.60">HVI</text>
<text x="412.00" y="782.60">ARI</text>
<text x="529.38" y="782.60">SZC</text>
<text x="617.50" y="782.60">CAP</text>
<text x="818.75" y="782.60">NUE</text>
<text x="961.10" y="782.60">OCT</text>
<text x="1059.40" y="782.60">ORI</text>
<text x="1186.50" y="782.60">AMO</text>
<text x="1255.62" y="782.60">DPC</text>
<text x="1328.88" y="782.60">XVI</text>
<text x="1407.75" y="782.60">QUA</text>
<text x="1559.60" y="782.60">AAN</text>
<text x="353.00" y="766.60">TAH</text>
<text x="431.90" y="766.60">JEA</text>
<text x="480.50" y="766.60">JIP</text>
<text x="538.90" y="766.60">PPS</text>
<text x="578.75" y="766.60">ZCS</text>
<text x="632.50" y="766.60">GDR</text>
<text x="970.10" y="766.60">DRA</text>
<text x="1073.88" y="766.60">LUM</text>
<text x="1113.12" y="766.60">RPU</text>
<text x="1176.88" y="766.60">THA</text>
<text x="1260.00" y="766.60">PSU</text>
<text x="1470.60" y="766.60">XCB</text>
<text x="431.50" y="749.60">JRC</text>
<text x="543.88" y="749.60">CAN</text>
<text x="578.50" y="749.60">FAN</text>
<text x="681.25" y="749.60">PER</text>
<text x="1049.25" y="749.60">CTA</text>
<text x="1264.40" y="749.60">HYD</text>
<text x="1481.12" y="749.60">XUM</text>
<text x="441.50" y="733.60">COR</text>
<text x="656.90" y="733.60">SDA</text>
<text x="1049.00" y="733.60">LMI</text>
<text x="1166.30" y="733.60">LEO</text>
<text x="1274.70" y="733.60">EHY</text>
<text x="1500.62" y="733.60">ECV</text>
<text x="602.88" y="717.60">JXA</text>
<text x="714.60" y="717.60">KCG</text>
<text x="1156.60" y="717.60">AND</text>
<text x="1275.00" y="717.60">DAD</text>
<text x="666.25" y="700.60">ERI</text>
<text x="1108.50" y="700.60">SLD</text>
<text x="1211.12" y="700.60">ORS</text>
<text x="1299.38" y="700.60">GEM</text>
<text x="1122.88" y="684.60">KUM</text>
</g>
<g stroke="#ff0000" stroke-width="1.2" stroke-dasharray="5.14 2.22" fill="none">
<path d="M1149.50 842.5 V641.5"/>
<path d="M1151.50 842.5 V641.5"/>
</g>
<rect x="19.5" y="641.5" width="1766" height="201" fill="none" stroke="#fff" stroke-width="1.1"/>
<g stroke="#fff" stroke-width="1.1">
<path d="M19.50 842.5 V847.8"/>
<path d="M264.50 842.5 V847.8"/>
<path d="M510.50 842.5 V847.8"/>
<path d="M755.50 842.5 V847.8"/>
<path d="M1000.50 842.5 V847.8"/>
<path d="M1246.50 842.5 V847.8"/>
<path d="M1491.50 842.5 V847.8"/>
<path d="M1736.50 842.5 V847.8"/>
</g>
<g font-family="Liberation Sans, sans-serif" font-size="13.9" fill="#fff" text-anchor="middle">
<text transform="translate(19.10 862) scale(1.1 1)">0</text>
<text transform="translate(264.10 862) scale(1.1 1)">50</text>
<text transform="translate(510.10 862) scale(1.1 1)">100</text>
<text transform="translate(755.10 862) scale(1.1 1)">150</text>
<text transform="translate(1000.10 862) scale(1.1 1)">200</text>
<text transform="translate(1246.10 862) scale(1.1 1)">250</text>
<text transform="translate(1491.10 862) scale(1.1 1)">300</text>
<text transform="translate(1736.10 862) scale(1.1 1)">350</text>
<text x="902.4" y="882.2" font-size="14.3" textLength="146.5" lengthAdjust="spacingAndGlyphs">Solar longitude (deg)</text>
</g>
</svg>
</body></html>
